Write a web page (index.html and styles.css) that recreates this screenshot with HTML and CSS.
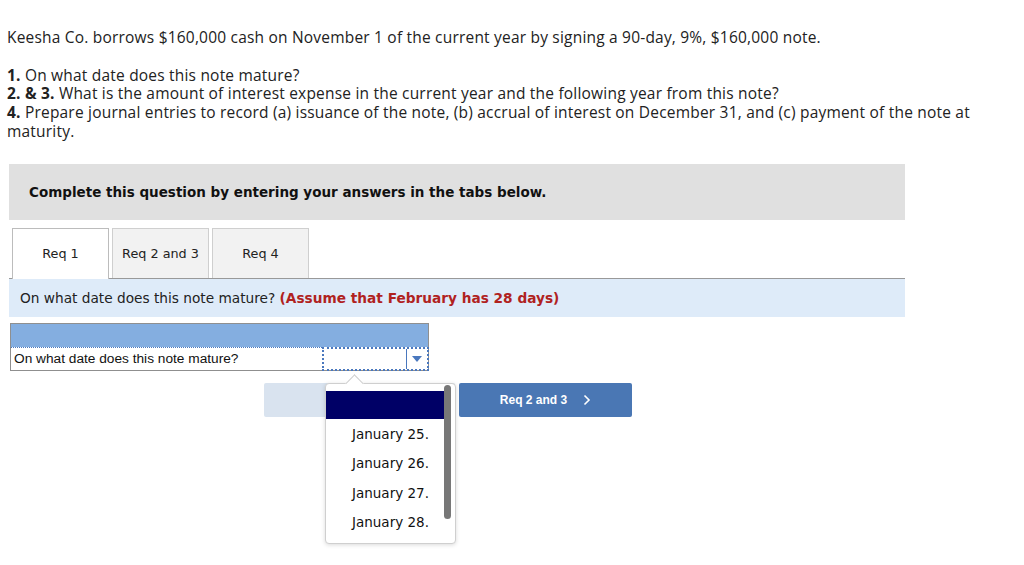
FILE: index.html
```html
<!DOCTYPE html>
<html>
<head>
<meta charset="utf-8">
<link rel="stylesheet" href="styles.css">
</head>
<body>
<div class="intro">
  <p class="lead">Keesha Co. borrows $160,000 cash on November 1 of the current year by signing a 90-day, 9%, $160,000 note.</p>
  <p class="reqs"><b>1.</b> On what date does this note mature?<br><b>2. &amp; 3.</b> What is the amount of interest expense in the current year and the following year from this note?<br><b>4.</b> Prepare journal entries to record (a) issuance of the note, (b) accrual of interest on December 31, and (c) payment of the note at maturity.</p>
</div>
<div class="notice">Complete this question by entering your answers in the tabs below.</div>
<div class="tabs">
  <div class="tab active">Req 1</div>
  <div class="tab">Req 2 and 3</div>
  <div class="tab">Req 4</div>
</div>
<div class="instr">On what date does this note mature? <span class="assume">(Assume that February has 28 days)</span></div>
<div class="answer">
  <div class="thead"></div>
  <div class="trow">
    <div class="qcell">On what date does this note mature?</div>
    <div class="sel">
      <div class="selval"></div>
      <div class="selarrow"><svg width="10" height="6" viewBox="0 0 10 6"><path d="M0 0H10L5 6Z" fill="#4a78be"/></svg></div>
    </div>
    <div class="popover">
      <div class="notch"></div>
      <div class="opt selected"></div>
      <div class="opt">January 25.</div>
      <div class="opt">January 26.</div>
      <div class="opt">January 27.</div>
      <div class="opt">January 28.</div>
      <div class="scroll"></div>
    </div>
  </div>
</div>
<div class="nav">
  <div class="btn prev"></div>
  <div class="btn next">Req 2 and 3 <svg width="8" height="12" viewBox="0 0 8 12"><path d="M1.5 1.5L6 6L1.5 10.5" stroke="#fff" stroke-width="1.6" fill="none"/></svg></div>
</div>
</body>
</html>
```
FILE: styles.css
```css
html, body {
  min-height: 565px;
}
body {
  margin: 0;
  background: #fff;
  color: #1a1a1a;
}
.intro {
  width: 990px;
  padding: 28px 0 0 7px;
  font-family: "Open Sans", Lato, sans-serif;
  font-size: 15.5px;
  letter-spacing: 0.2px;
  line-height: 18.7px;
  color: #222;
}
.intro p { margin: 0; }
.intro .lead { margin-bottom: 19px; }
.notice {
  margin: 23px 0 0 9px;
  width: 896px;
  height: 56px;
  box-sizing: border-box;
  padding-left: 20px;
  display: flex;
  align-items: center;
  background: #e0e0e0;
  font-family: "DejaVu Sans", Verdana, sans-serif;
  font-weight: bold;
  font-size: 13.5px;
  color: #111;
}
.tabs {
  margin: 8px 0 0 9px;
  width: 896px;
  height: 51px;
  box-sizing: border-box;
  border-bottom: 1px solid #999;
  display: flex;
  gap: 3px;
  padding-left: 3px;
}
.tab {
  width: 97px;
  height: 50px;
  box-sizing: border-box;
  border: 1px solid #cfcfcf;
  border-bottom: none;
  background: #f2f2f2;
  display: flex;
  align-items: center;
  justify-content: center;
  font-family: "DejaVu Sans", Verdana, sans-serif;
  font-size: 12.8px;
  color: #222;
}
.tab.active {
  background: #fff;
  border-color: #bcbcbc;
  height: 51px;
  margin-bottom: -1px;
}
.instr {
  margin-left: 9px;
  width: 896px;
  height: 38px;
  box-sizing: border-box;
  padding-left: 11px;
  line-height: 38px;
  background: #deebf9;
  font-family: "DejaVu Sans", Verdana, sans-serif;
  font-size: 13.7px;
  color: #222;
}
.assume { color: #b0221f; font-weight: bold; }
.answer {
  margin: 6px 0 0 10px;
  width: 419px;
}
.thead {
  height: 24px;
  background: #84aee0;
  border: 1px solid #8f8f8f;
  border-bottom: none;
  box-sizing: border-box;
}
.trow {
  position: relative;
  display: flex;
  height: 24px;
  box-sizing: border-box;
  border: 1px solid #8f8f8f;
  border-top: none;
}
.qcell {
  flex: 1;
  padding-left: 3px;
  display: flex;
  align-items: center;
  font-family: "Liberation Sans", Arial, sans-serif;
  font-size: 13.7px;
  color: #111;
  border-top: 1px dotted #4a78be;
}
.sel {
  width: 107px;
  height: 24px;
  margin-right: -1px;
  box-sizing: border-box;
  border: 2px dotted #4a78be;
  display: flex;
}
.selval { flex: 1; }
.selarrow {
  width: 20px;
  border-left: 1px solid #4a78be;
  display: flex;
  align-items: center;
  justify-content: center;
}
.popover {
  position: absolute;
  left: 314px;
  top: 36px;
  width: 131px;
  height: 161px;
  box-sizing: border-box;
  background: #fff;
  border: 1px solid #cfcfcf;
  border-radius: 4px;
  box-shadow: 0 1px 4px rgba(0,0,0,0.15);
  padding-top: 7px;
  z-index: 5;
}
.notch {
  position: absolute;
  left: 22px;
  top: -7px;
  width: 12px;
  height: 12px;
  background: #fff;
  border-left: 1px solid #cfcfcf;
  border-top: 1px solid #cfcfcf;
  transform: rotate(45deg);
}
.opt {
  position: relative;
  width: 120px;
  height: 29.4px;
  box-sizing: border-box;
  padding-left: 26px;
  display: flex;
  align-items: center;
  font-family: "DejaVu Sans", Verdana, sans-serif;
  font-size: 13.5px;
  color: #111;
}
.opt.selected {
  background: #000066;
  height: 28px;
  margin-bottom: 0.6px;
}
.scroll {
  position: absolute;
  right: 4px;
  top: 1px;
  width: 7px;
  height: 134px;
  border-radius: 4px;
  background: #777;
}
.nav {
  display: flex;
  gap: 4px;
  margin: 12px 0 0 264px;
}
.btn {
  height: 34px;
  border-radius: 2px;
}
.prev { width: 191px; background: #d9e3ef; }
.next {
  width: 173px;
  background: #4a77b4;
  color: #fff;
  font-family: "Liberation Sans", Arial, sans-serif;
  font-weight: bold;
  font-size: 12px;
  display: flex;
  align-items: center;
  justify-content: center;
  gap: 16px;
  box-sizing: border-box;
}
```
